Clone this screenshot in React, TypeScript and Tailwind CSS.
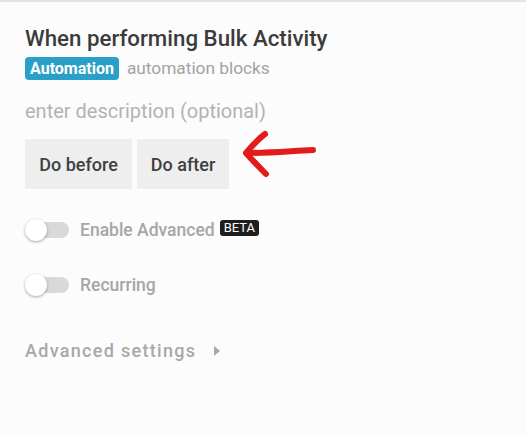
import React from "react";

function Toggle() {
  return (
    <div className="relative w-[46px] h-[22px] flex items-center">
      <div className="ml-[1px] w-[43px] h-[16px] rounded-full bg-[#d9d9d9]" />
      <div className="absolute left-0 top-0 w-[22px] h-[22px] rounded-full bg-white shadow-[0_1px_3px_rgba(0,0,0,0.35)]" />
    </div>
  );
}

export default function App() {
  return (
    <div
      className="w-[526px] h-[436px] bg-[#fcfcfc] border-t-2 border-[#e3e3e3] overflow-hidden"
      style={{ fontFamily: "Roboto, 'Liberation Sans', sans-serif" }}
    >
      <div className="pl-[25px] pt-[21px]">
        <div className="text-[22.3px] leading-[30px] font-medium text-[#3b3b3b]">When performing Bulk Activity</div>
        <div className="flex items-center mt-[4px]">
          <span className="bg-[#2aa0c9] text-white font-bold text-[16px] leading-[23px] h-[23px] px-[5px] rounded-[4px]">Automation</span>
          <span className="ml-[8px] text-[17.3px] leading-[23px] text-[#a3a3a3]">automation blocks</span>
        </div>
        <div className="mt-[19px] text-[20px] leading-[24px] text-[#b3b3b3]">enter description (optional)</div>
        <div className="flex items-center mt-[16px]">
          <div className="flex gap-[5px]">
            <button className="w-[107px] h-[50px] bg-[#eeeeee] text-[18px] font-medium text-[#404040]">Do before</button>
            <button className="w-[92px] h-[50px] bg-[#eeeeee] text-[18px] font-medium text-[#404040]">Do after</button>
          </div>
          <svg width="80" height="52" viewBox="0 0 80 52" className="ml-[12px] -mt-[16px]">
            <path
              d="M24 4 C16 10, 10 17, 5 23 C12 31, 18 37, 25 44"
              stroke="#e31b1b"
              strokeWidth="6"
              fill="none"
              strokeLinecap="round"
              strokeLinejoin="round"
            />
            <path d="M6 23 C28 23, 50 21, 72 20" stroke="#e31b1b" strokeWidth="6" fill="none" strokeLinecap="round" />
          </svg>
        </div>
        <div className="flex items-center mt-[29px] h-[24px]">
          <Toggle />
          <span className="ml-[9px] text-[17.5px] font-medium text-[#a6a6a6]">Enable Advanced</span>
          <span className="ml-[5px] bg-[#1e1e1e] text-white text-[13px] leading-[16px] px-[4px] rounded-[3px] -mt-[4px]">BETA</span>
        </div>
        <div className="flex items-center mt-[31px] h-[24px]">
          <Toggle />
          <span className="ml-[9px] text-[17.5px] font-medium text-[#a6a6a6]">Recurring</span>
        </div>
        <div className="flex items-center mt-[40px]">
          <span className="text-[18px] font-medium tracking-[1.3px] text-[#a8a8a8]">Advanced settings</span>
          <svg width="8" height="12" viewBox="0 0 8 12" className="ml-[17px]">
            <path d="M1 1 L7 6 L1 11 Z" fill="#a8a8a8" />
          </svg>
        </div>
      </div>
    </div>
  );
}
